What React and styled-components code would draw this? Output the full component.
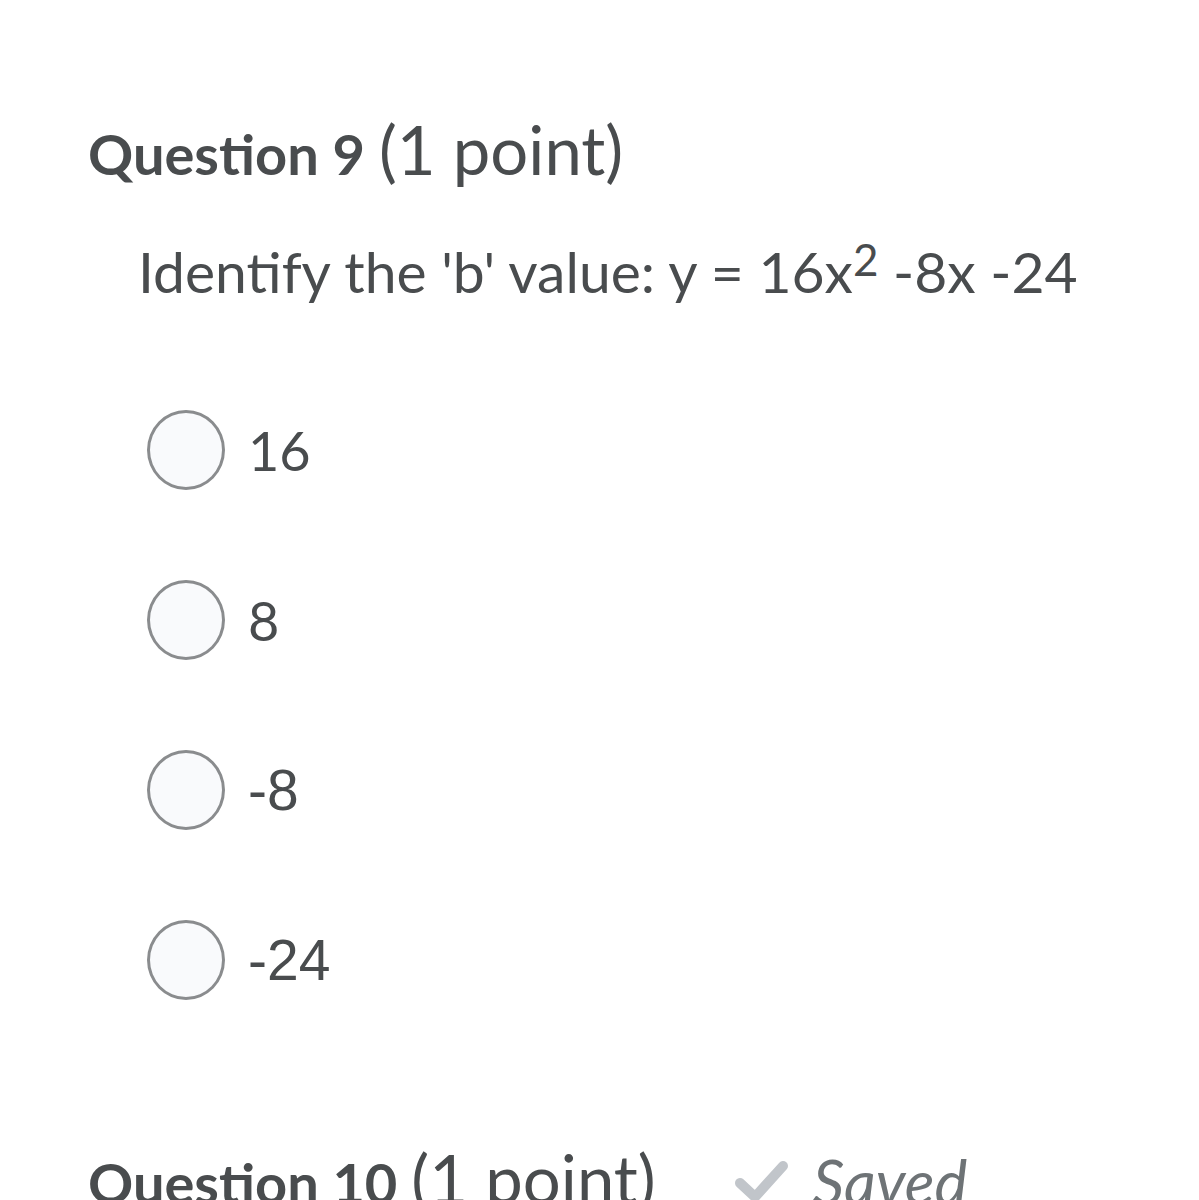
import React from "react";
import styled, { createGlobalStyle } from "styled-components";

const GlobalStyle = createGlobalStyle`
  html, body {
    margin: 0;
    padding: 0;
    background: #ffffff;
  }
  body {
    font-family: Lato, "Open Sans", sans-serif;
    color: #494c4e;
  }
`;

const options = [
  { label: "16", alt: false },
  { label: "8", alt: false },
  { label: "-8", alt: true },
  { label: "-24", alt: true },
];

function App() {
  return (
    <>
      <GlobalStyle />
      <Page>
        <Heading>
          <Strong>Question 9</Strong>
          <Points>(1 point)</Points>
        </Heading>
        <Prompt>
          Identify the 'b' value: y = 16x<Sup>2</Sup> -8x -24
        </Prompt>
        <Choices>
          {options.map((o) => (
            <Choice key={o.label}>
              <Radio />
              <ChoiceLabel alt={o.alt}>{o.label}</ChoiceLabel>
            </Choice>
          ))}
        </Choices>
        <NextRow>
          <Heading as="div">
            <Strong>Question 10</Strong>
            <Points>(1 point)</Points>
          </Heading>
          <Saved>
            <svg width="56" height="42" viewBox="0 0 56 42">
              <path
                d="M6 23 L21 37 L49 6"
                fill="none"
                stroke="#c1c5ca"
                strokeWidth="10"
                strokeLinecap="round"
                strokeLinejoin="round"
              />
            </svg>
            <SavedText>Saved</SavedText>
          </Saved>
        </NextRow>
      </Page>
    </>
  );
}

export default App;

const Page = styled.div`
  width: 1199px;
  height: 1200px;
  overflow: hidden;
  padding: 107px 0 0 88px;
  box-sizing: border-box;
`;

const Heading = styled.h2`
  margin: 0;
  font-weight: 400;
  font-size: 56px;
  line-height: 84px;
  white-space: nowrap;
  display: flex;
  align-items: baseline;
  gap: 14px;
`;

const Strong = styled.span`
  font-weight: 700;
  font-size: 56px;
`;

const Points = styled.span`
  font-size: 67px;
  font-weight: 400;
`;

const Prompt = styled.p`
  margin: 43px 0 0 50px;
  font-size: 57px;
  line-height: 64px;
  white-space: nowrap;
`;

const Sup = styled.sup`
  font-size: 44px;
  line-height: 0;
  vertical-align: 17px;
`;

const Choices = styled.div`
  margin: 107px 0 0 59px;
  display: flex;
  flex-direction: column;
  gap: 90px;
`;

const Choice = styled.div`
  display: flex;
  align-items: center;
  height: 80px;
`;

const Radio = styled.span`
  width: 78px;
  height: 80px;
  box-sizing: border-box;
  border: 3px solid #8a8c8e;
  border-radius: 50%;
  background: #f9fafc;
  flex: none;
`;

const ChoiceLabel = styled.span`
  margin-left: 23px;
  font-size: ${(p) => (p.alt ? "57px" : "54px")};
  font-family: ${(p) =>
    p.alt ? '"Liberation Sans", Arial, sans-serif' : "Lato, sans-serif"};
`;

const NextRow = styled.div`
  margin-top: 136px;
  display: flex;
  align-items: center;
  gap: 78px;
`;

const Saved = styled.div`
  display: flex;
  align-items: center;
  gap: 23px;
`;

const SavedText = styled.span`
  font-style: italic;
  font-size: 62px;
  color: #6e7376;
`;
